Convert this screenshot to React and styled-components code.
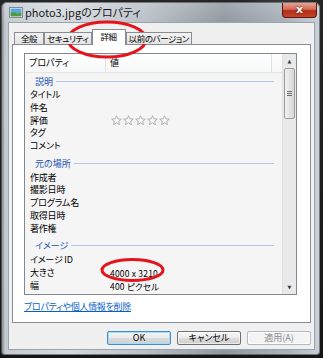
import React from "react";
import styled, { createGlobalStyle } from "styled-components";

const GlobalStyle = createGlobalStyle`
  html, body {
    margin: 0;
    padding: 0;
  }
  body {
    background: #1d1d1d;
    font-family: "Noto Sans CJK JP", "Noto Sans", sans-serif;
    font-feature-settings: "palt";
    color: #000;
  }
`;

const Page = styled.div`
  position: relative;
  width: 323px;
  height: 358px;
  overflow: hidden;
  background:
    radial-gradient(circle at 280px 0px, #3a3a3a 0, transparent 40px),
    linear-gradient(180deg, #262626 0, #151515 100%);
`;

const Window = styled.div`
  box-sizing: border-box;
  width: 319px;
  height: 353px;
  margin: 2px 0 0 1px;
  padding: 0 5px 5px 7px;
  border-radius: 6px 6px 4px 4px;
  display: flex;
  flex-direction: column;
  background:
    linear-gradient(180deg, rgba(255, 255, 255, 0.18) 0, rgba(255, 255, 255, 0) 22px),
    linear-gradient(
      90deg,
      #6f757b 0,
      #c4cad0 4px,
      #d6dbe0 20%,
      #b9c0c7 45%,
      #8f979f 70%,
      #aab2ba 90%,
      #c9d0d7 100%
    );
  box-shadow: inset 0 0 0 1px rgba(40, 40, 40, 0.5);
`;

const TitleBar = styled.div`
  height: 20px;
  display: flex;
  align-items: center;
`;

const TitleIcon = styled.svg`
  width: 14px;
  height: 11px;
  margin-left: 1px;
  flex: none;
`;

const TitleText = styled.span`
  margin-left: 2px;
  font-size: 11px;
  line-height: 13px;
  color: #1a1a1a;
`;

const CloseButton = styled.div`
  box-sizing: border-box;
  align-self: flex-start;
  width: 35px;
  height: 15px;
  margin: 1px -2px 0 auto;
  border: 1px solid #5a1a14;
  border-top: none;
  border-radius: 0 0 4px 4px;
  background: linear-gradient(180deg, #e9a394 0, #d46a55 45%, #b22d16 55%, #c7442a 100%);
  display: flex;
  align-items: center;
  justify-content: center;
  color: #fff;
  font-family: "DejaVu Sans", sans-serif;
  font-weight: bold;
  font-size: 11px;
  line-height: 12px;
  text-shadow: 0 0 2px #3a0800;
`;

const Client = styled.div`
  box-sizing: border-box;
  flex: 1;
  display: flex;
  flex-direction: column;
  padding: 6px 3px 0 3px;
  background: #f0f0f0;
  border: 1px solid #98a3ae;
`;

const Tabs = styled.div`
  position: relative;
  z-index: 1;
  height: 16px;
  margin-bottom: -1px;
  padding-left: 2px;
  display: flex;
  align-items: flex-end;
`;

const Tab = styled.div`
  box-sizing: border-box;
  min-width: ${p => p.$w}px;
  height: ${p => (p.$active ? 16 : 12)}px;
  margin-bottom: ${p => (p.$active ? 0 : 1)}px;
  padding: 0 2px;
  border: 1px solid #898c95;
  border-bottom: none;
  background: ${p =>
    p.$active ? "#fff" : "linear-gradient(180deg, #f3f3f3 0, #e3e3e3 100%)"};
  font-size: 8.5px;
  letter-spacing: -0.4px;
  line-height: ${p => (p.$active ? 13 : 11)}px;
  text-align: center;
  white-space: nowrap;
`;

const Panel = styled.div`
  box-sizing: border-box;
  height: 279px;
  padding: 8px 13px 0 11px;
  border: 1px solid #898c95;
  background: #fff;
  display: flex;
  flex-direction: column;
`;

const List = styled.div`
  box-sizing: border-box;
  height: 242px;
  border: 1px solid #828790;
  background: #f5f5f5;
  display: flex;
  overflow: hidden;
`;

const ListMain = styled.div`
  flex: 1;
  display: flex;
  flex-direction: column;
  overflow: hidden;
`;

const Header = styled.div`
  height: 18px;
  flex: none;
  display: flex;
  background: linear-gradient(180deg, #ffffff 0, #f7f8f9 100%);
  border-bottom: 1px solid #e5e5e5;
`;

const HeaderCell = styled.div`
  box-sizing: border-box;
  width: ${p => (p.$w ? `${p.$w}px` : "auto")};
  flex: ${p => (p.$w ? "none" : 1)};
  padding-left: 4px;
  border-right: ${p => (p.$w ? "1px solid #dfe2e6" : "none")};
  font-size: 9px;
  line-height: 17px;
  white-space: nowrap;
`;

const Body = styled.div`
  flex: 1;
  overflow: hidden;
`;

const Section = styled.div`
  height: 16px;
  margin-top: ${p => (p.$first ? 0 : 3)}px;
  padding-left: 10px;
  margin-right: 8px;
  display: flex;
  align-items: center;
  font-size: 9px;
  color: #2251b5;

  &::after {
    content: "";
    flex: 1;
    height: 1px;
    margin-left: 3px;
    background: #b3c6e6;
  }
`;

const Row = styled.div`
  height: 12.7px;
  display: flex;
  align-items: center;
  white-space: nowrap;
`;

const Label = styled.div`
  box-sizing: border-box;
  width: 85px;
  padding-left: 5px;
  font-size: 9px;
  letter-spacing: -0.2px;
  line-height: 12px;
`;

const Value = styled.div`
  font-size: 8.5px;
  line-height: 12px;
  letter-spacing: 0.2px;
`;

const Stars = styled.div`
  display: flex;
  gap: 1px;
  margin-left: 1px;
`;

const Star = styled.svg`
  width: 11px;
  height: 11px;
`;

const Scrollbar = styled.div`
  width: 13px;
  flex: none;
  display: flex;
  flex-direction: column;
  background: #e9e9e9;
  border-left: 1px solid #e2e2e2;
`;

const Arrow = styled.div`
  height: 14px;
  flex: none;
  display: flex;
  align-items: center;
  justify-content: center;
  font-family: "DejaVu Sans", sans-serif;
  font-size: 5px;
  color: #404040;
`;

const Thumb = styled.div`
  box-sizing: border-box;
  height: 51px;
  margin: 0 1px;
  border: 1px solid #9b9b9b;
  border-radius: 2px;
  background: linear-gradient(90deg, #f2f2f2 0, #e4e4e4 50%, #d7d7d7 100%);
  display: flex;
  align-items: center;
  justify-content: center;
`;

const Grip = styled.div`
  width: 5px;
  height: 5px;
  background: repeating-linear-gradient(180deg, #6c6c6c 0, #6c6c6c 1px, transparent 1px, transparent 2px);
`;

const Track = styled.div`
  flex: 1;
`;

const Link = styled.a`
  margin-top: 6px;
  font-size: 9px;
  letter-spacing: -0.3px;
  line-height: 12px;
  color: #0a5fc6;
  text-decoration: underline;
  white-space: nowrap;
`;

const ButtonRow = styled.div`
  margin-top: 8px;
  display: flex;
  justify-content: flex-end;
  gap: 6px;
`;

const Button = styled.div`
  box-sizing: border-box;
  width: 64px;
  height: 14px;
  border: 1px solid ${p => (p.$default ? "#3d8fd0" : p.$disabled ? "#b5b9bd" : "#707070")};
  border-radius: 2px;
  background: ${p =>
    p.$disabled
      ? "#f4f4f4"
      : "linear-gradient(180deg, #f6f6f6 0, #ebebeb 50%, #dddddd 51%, #cfcfcf 100%)"};
  box-shadow: ${p => (p.$default ? "inset 0 0 0 1px #a9dcf6" : "inset 0 0 0 1px rgba(255,255,255,0.6)")};
  color: ${p => (p.$disabled ? "#8a8a8a" : "#000")};
  font-size: 9px;
  line-height: 12px;
  text-align: center;
`;

const Annotations = styled.svg`
  position: absolute;
  left: 0;
  top: 0;
  width: 323px;
  height: 358px;
  pointer-events: none;
`;

const sections = [
  { title: "説明", rows: ["タイトル", "件名", "評価", "タグ", "コメント"] },
  { title: "元の場所", rows: ["作成者", "撮影日時", "プログラム名", "取得日時", "著作権"] },
  { title: "イメージ", rows: ["イメージ ID", "大きさ", "幅"] },
];

const values = {
  大きさ: "4000 x 3210",
  幅: "400 ピクセル",
};

const StarIcon = () => (
  <Star viewBox="0 0 12 12">
    <polygon
      points="6,0.8 7.5,4.2 11.2,4.5 8.4,6.9 9.3,10.6 6,8.6 2.7,10.6 3.6,6.9 0.8,4.5 4.5,4.2"
      fill="#f7f7f7"
      stroke="#a3a3a3"
      strokeWidth="0.9"
      strokeLinejoin="round"
    />
  </Star>
);

const App = () => {
  return (
    <Page>
      <GlobalStyle />
      <Window>
        <TitleBar>
          <TitleIcon viewBox="0 0 14 11">
            <rect x="0.5" y="0.5" width="13" height="10" fill="#fff" stroke="#7a8a99" />
            <rect x="1.5" y="1.5" width="11" height="5" fill="#5aa6e0" />
            <path d="M1.5 9.5 L1.5 6 Q5 4.5 8 6.5 Q10.5 5.5 12.5 6 L12.5 9.5 Z" fill="#4f9a3a" />
          </TitleIcon>
          <TitleText>photo3.jpgのプロパティ</TitleText>
          <CloseButton>x</CloseButton>
        </TitleBar>
        <Client>
          <Tabs>
            <Tab $w={30}>全般</Tab>
            <Tab $w={45}>セキュリティ</Tab>
            <Tab $w={34} $active>
              詳細
            </Tab>
            <Tab $w={64}>以前のバージョン</Tab>
          </Tabs>
          <Panel>
            <List>
              <ListMain>
                <Header>
                  <HeaderCell $w={81}>プロパティ</HeaderCell>
                  <HeaderCell $w={166}>値</HeaderCell>
                  <HeaderCell />
                </Header>
                <Body>
                  {sections.map((s, i) => (
                    <React.Fragment key={s.title}>
                      <Section $first={i === 0}>{s.title}</Section>
                      {s.rows.map(r => (
                        <Row key={r}>
                          <Label>{r}</Label>
                          {r === "評価" ? (
                            <Stars>
                              {[0, 1, 2, 3, 4].map(n => (
                                <StarIcon key={n} />
                              ))}
                            </Stars>
                          ) : (
                            <Value>{values[r] || ""}</Value>
                          )}
                        </Row>
                      ))}
                    </React.Fragment>
                  ))}
                </Body>
              </ListMain>
              <Scrollbar>
                <Arrow>▲</Arrow>
                <Thumb>
                  <Grip />
                </Thumb>
                <Track />
                <Arrow>▼</Arrow>
              </Scrollbar>
            </List>
            <Link>プロパティや個人情報を削除</Link>
          </Panel>
          <ButtonRow>
            <Button $default>OK</Button>
            <Button>キャンセル</Button>
            <Button $disabled>適用(A)</Button>
          </ButtonRow>
        </Client>
      </Window>
      <Annotations viewBox="0 0 323 358">
        <ellipse cx="107" cy="39.5" rx="39" ry="17.5" fill="none" stroke="#e5131b" strokeWidth="3" />
        <ellipse cx="132.5" cy="270" rx="30.5" ry="10.5" fill="none" stroke="#e5131b" strokeWidth="3" />
      </Annotations>
    </Page>
  );
};

export default App;
